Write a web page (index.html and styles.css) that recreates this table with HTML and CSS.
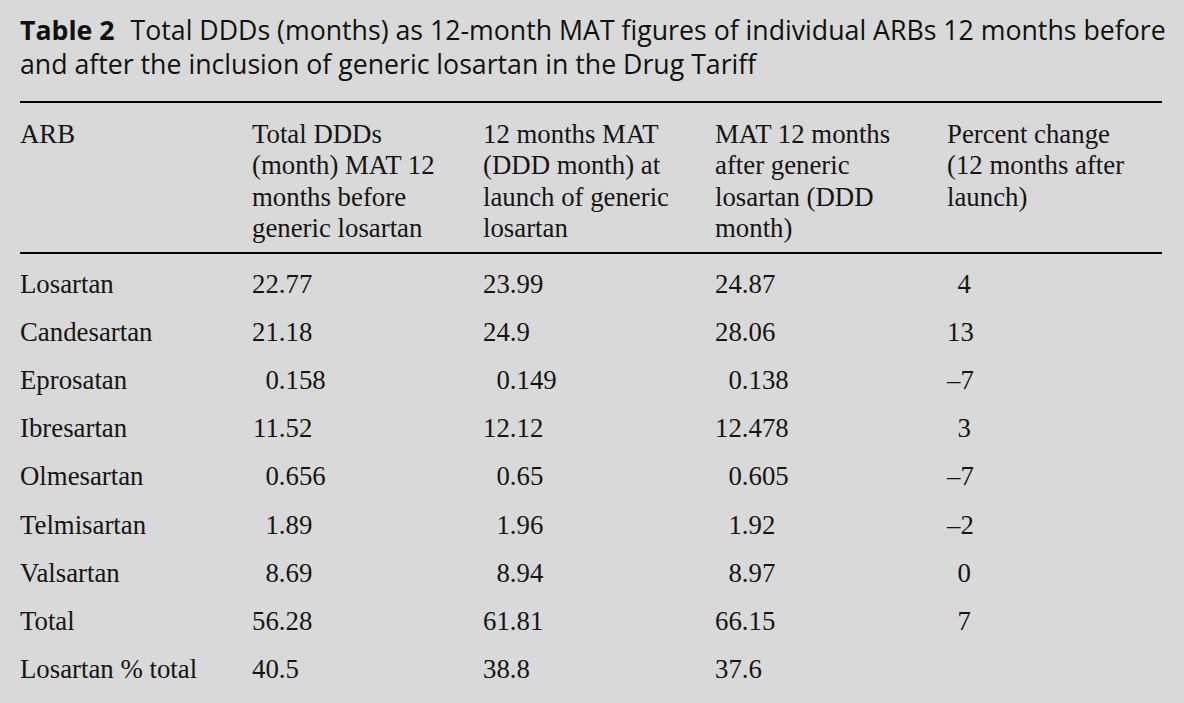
FILE: index.html
```html
<!DOCTYPE html>
<html lang="en">
<head>
<meta charset="utf-8">
<title>Table 2</title>
<link rel="stylesheet" href="styles.css">
</head>
<body>
<div class="page">
  <p class="caption"><b class="label">Table 2</b>Total DDDs (months) as 12-month MAT figures of individual ARBs 12 months before and after the inclusion of generic losartan in the Drug Tariff</p>
  <table class="data">
    <colgroup>
      <col class="c1"><col class="c2"><col class="c3"><col class="c4"><col class="c5">
    </colgroup>
    <thead>
      <tr>
        <th>ARB</th>
        <th>Total DDDs (month) MAT 12 months before generic losartan</th>
        <th>12 months MAT (DDD month) at launch of generic losartan</th>
        <th>MAT 12 months after generic losartan (DDD month)</th>
        <th>Percent change (12 months after launch)</th>
      </tr>
    </thead>
    <tbody>
      <tr><td>Losartan</td><td><span class="i">22</span>.77</td><td><span class="i">23</span>.99</td><td><span class="i">24</span>.87</td><td><span class="p">4</span></td></tr>
      <tr><td>Candesartan</td><td><span class="i">21</span>.18</td><td><span class="i">24</span>.9</td><td><span class="i">28</span>.06</td><td><span class="p">13</span></td></tr>
      <tr><td>Eprosatan</td><td><span class="i">0</span>.158</td><td><span class="i">0</span>.149</td><td><span class="i">0</span>.138</td><td><span class="p">–7</span></td></tr>
      <tr><td>Ibresartan</td><td><span class="i">11</span>.52</td><td><span class="i">12</span>.12</td><td><span class="i">12</span>.478</td><td><span class="p">3</span></td></tr>
      <tr><td>Olmesartan</td><td><span class="i">0</span>.656</td><td><span class="i">0</span>.65</td><td><span class="i">0</span>.605</td><td><span class="p">–7</span></td></tr>
      <tr><td>Telmisartan</td><td><span class="i">1</span>.89</td><td><span class="i">1</span>.96</td><td><span class="i">1</span>.92</td><td><span class="p">–2</span></td></tr>
      <tr><td>Valsartan</td><td><span class="i">8</span>.69</td><td><span class="i">8</span>.94</td><td><span class="i">8</span>.97</td><td><span class="p">0</span></td></tr>
      <tr><td>Total</td><td><span class="i">56</span>.28</td><td><span class="i">61</span>.81</td><td><span class="i">66</span>.15</td><td><span class="p">7</span></td></tr>
      <tr><td>Losartan % total</td><td><span class="i">40</span>.5</td><td><span class="i">38</span>.8</td><td><span class="i">37</span>.6</td><td></td></tr>
    </tbody>
  </table>
</div>
</body>
</html>
```
FILE: styles.css
```css
html, body {
  margin: 0;
  padding: 0;
  background: #d9d9d9;
}
.page {
  width: 1142px;
  padding: 0 0 0 20px;
  color: #111;
}
.caption {
  margin: 0;
  padding-top: 13px;
  width: 1160px;
  font-family: "Open Sans", "Noto Sans", sans-serif;
  font-size: 26.7px;
  line-height: 34px;
  height: 88px;
}
.caption .label {
  font-weight: 700;
  margin-right: 0.6em;
}
.data {
  width: 1142px;
  table-layout: fixed;
  border-collapse: collapse;
  font-family: "Liberation Serif", "Times New Roman", serif;
  font-size: 26.8px;
  line-height: 31.3px;
  color: #151515;
}
.c1 { width: 232px; }
.c2 { width: 231px; }
.c3 { width: 232px; }
.c4 { width: 232px; }
.c5 { width: 215px; }
.data thead th {
  font-weight: 400;
  text-align: left;
  vertical-align: top;
  padding: 16px 20px 8px 0;
  border-top: 2px solid #000;
  border-bottom: 2px solid #000;
}
.data tbody td {
  padding: 8.45px 0;
  white-space: nowrap;
}
.data tbody tr:first-child td {
  padding-top: 14.5px;
}
.i {
  display: inline-block;
  width: 26.8px;
  text-align: right;
}
.p {
  display: inline-block;
  width: 24px;
  text-align: right;
}
```
